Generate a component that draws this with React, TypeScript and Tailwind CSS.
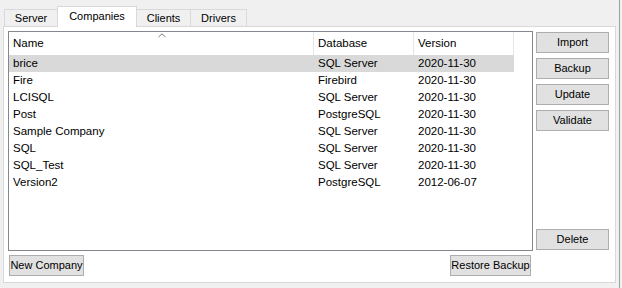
import React from "react";

const rows = [
  ["brice", "SQL Server", "2020-11-30"],
  ["Fire", "Firebird", "2020-11-30"],
  ["LCISQL", "SQL Server", "2020-11-30"],
  ["Post", "PostgreSQL", "2020-11-30"],
  ["Sample Company", "SQL Server", "2020-11-30"],
  ["SQL", "SQL Server", "2020-11-30"],
  ["SQL_Test", "SQL Server", "2020-11-30"],
  ["Version2", "PostgreSQL", "2012-06-07"],
];

function Btn({ label, className = "" }: { label: string; className?: string }) {
  return (
    <div
      className={
        "h-[21px] flex items-center justify-center bg-[#e1e1e1] border border-[#adadad] text-[11px] text-black " +
        className
      }
    >
      {label}
    </div>
  );
}

export default function App() {
  return (
    <div
      className="w-[622px] h-[288px] bg-[#f0f0f0] flex overflow-hidden text-black"
      style={{ fontFamily: '"Liberation Sans", Arial, sans-serif' }}
    >
      <div className="w-[619px] flex flex-col">
        {/* tabs */}
        <div className="h-[26px] flex items-end pl-[4px] text-[11px]">
          <div className="w-[53px] h-[17px] border-l border-t border-[#d9d9d9] bg-[#f0f0f0] flex items-center justify-center">
            Server
          </div>
          <div className="w-[80px] h-[21px] mb-[-1px] relative z-10 border-l border-t border-r border-[#d9d9d9] bg-white flex items-center justify-center pb-[2px]">
            Companies
          </div>
          <div className="w-[54px] h-[17px] border-t border-r border-[#d9d9d9] bg-[#f0f0f0] flex items-center justify-center">
            Clients
          </div>
          <div className="w-[56px] h-[17px] border-t border-r border-[#d9d9d9] bg-[#f0f0f0] flex items-center justify-center">
            Drivers
          </div>
        </div>
        {/* panel */}
        <div className="ml-[3px] w-[613px] h-[257px] border border-[#d9d9d9] bg-white flex flex-col pl-[4px] pt-[4px]">
          <div className="flex">
            <div className="w-[525px] h-[220px] border border-[#828790] bg-white flex flex-col text-[11.5px]">
              <div className="h-[23px] flex">
                <div className="w-[305px] h-full border-r border-[#e5e5e5] flex items-center pl-[4px] relative">
                  Name
                  <svg
                    className="absolute top-[1px] left-[149px]"
                    width="8"
                    height="5"
                    viewBox="0 0 8 5"
                  >
                    <polyline points="0.5,4 4,0.8 7.5,4" fill="none" stroke="#7a7a7a" strokeWidth="1" />
                  </svg>
                </div>
                <div className="w-[100px] h-full border-r border-[#e5e5e5] flex items-center pl-[4px]">
                  Database
                </div>
                <div className="w-[100px] h-full border-r border-[#e5e5e5] flex items-center pl-[4px]">
                  Version
                </div>
              </div>
              {rows.map((r, i) => (
                <div
                  key={r[0]}
                  className={"h-[17px] w-[505px] flex items-center " + (i === 0 ? "bg-[#d9d9d9]" : "")}
                >
                  <div className="w-[305px] pl-[4px] whitespace-nowrap">{r[0]}</div>
                  <div className="w-[100px] pl-[4px] whitespace-nowrap">{r[1]}</div>
                  <div className="w-[100px] pl-[4px] whitespace-nowrap">{r[2]}</div>
                </div>
              ))}
            </div>
            <div className="ml-[3px] w-[73px] h-[220px] flex flex-col gap-[5px] pt-[1px] pb-[1px]">
              <Btn label="Import" />
              <Btn label="Backup" />
              <Btn label="Update" />
              <Btn label="Validate" />
              <Btn label="Delete" className="mt-auto" />
            </div>
          </div>
          <div className="w-[525px] mt-[4px] flex justify-between pl-[1px] pr-[2px]">
            <Btn label="New Company" className="w-[75px]" />
            <Btn label="Restore Backup" className="w-[81px]" />
          </div>
        </div>
      </div>
      <div className="w-[1px] bg-[#a0a0a0]" />
      <div className="flex-1 bg-[#f0f0f0]" />
    </div>
  );
}
